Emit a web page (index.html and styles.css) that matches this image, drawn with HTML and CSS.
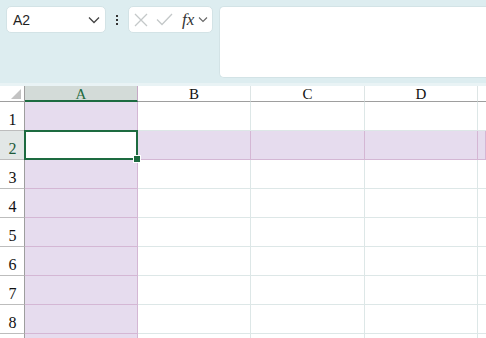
FILE: index.html
```html
<!DOCTYPE html>
<html>
<head>
<meta charset="utf-8">
<link rel="stylesheet" href="styles.css">
</head>
<body>
<div class="top">
  <div class="namebox">
    <span class="ref">A2</span>
    <svg class="chev" width="12" height="8" viewBox="0 0 12 8"><path d="M1 1.5 L6 6.5 L11 1.5" fill="none" stroke="#444" stroke-width="1.3"/></svg>
  </div>
  <div class="kebab"><i></i><i></i><i></i></div>
  <div class="fbox">
    <svg width="14" height="14" viewBox="0 0 14 14"><path d="M1 1 L13 13 M13 1 L1 13" stroke="#c4c8c9" stroke-width="1.3"/></svg>
    <svg width="17" height="13" viewBox="0 0 17 13"><path d="M1 6.5 L6 11.5 L16 1" fill="none" stroke="#c4c8c9" stroke-width="1.3"/></svg>
    <span class="fx">fx</span>
    <svg width="10" height="7" viewBox="0 0 10 7"><path d="M1 1.5 L5 5.5 L9 1.5" fill="none" stroke="#666" stroke-width="1.1"/></svg>
  </div>
  <div class="formula"></div>
</div>
<div class="sheet">
  <div class="corner"><span class="tri"></span></div>
  <div class="ch sel">A</div>
  <div class="ch">B</div>
  <div class="ch">C</div>
  <div class="ch">D</div>
  <div class="ch last"></div>

  <div class="rh">1</div><div class="c hl"></div><div class="c"></div><div class="c"></div><div class="c"></div><div class="c last"></div>
  <div class="rh rsel">2</div><div class="c active"><span class="handle"></span></div><div class="c hl"></div><div class="c hl"></div><div class="c hl"></div><div class="c hl last"></div>
  <div class="rh">3</div><div class="c hl"></div><div class="c"></div><div class="c"></div><div class="c"></div><div class="c last"></div>
  <div class="rh">4</div><div class="c hl"></div><div class="c"></div><div class="c"></div><div class="c"></div><div class="c last"></div>
  <div class="rh">5</div><div class="c hl"></div><div class="c"></div><div class="c"></div><div class="c"></div><div class="c last"></div>
  <div class="rh">6</div><div class="c hl"></div><div class="c"></div><div class="c"></div><div class="c"></div><div class="c last"></div>
  <div class="rh">7</div><div class="c hl"></div><div class="c"></div><div class="c"></div><div class="c"></div><div class="c last"></div>
  <div class="rh">8</div><div class="c hl"></div><div class="c"></div><div class="c"></div><div class="c"></div><div class="c last"></div>
  <div class="rh"></div><div class="c hl"></div><div class="c"></div><div class="c"></div><div class="c"></div><div class="c last"></div>
</div>
</body>
</html>
```

FILE: styles.css
```css
* { box-sizing: border-box; }
html, body { margin: 0; padding: 0; }
body {
  width: 486px;
  height: 338px;
  overflow: hidden;
  background: #ffffff;
  font-family: "Liberation Sans", Arial, sans-serif;
}
.top {
  height: 86px;
  background: #ddedf0;
  border-bottom: 3px solid #e9f3f5;
  padding: 6px 0 0 6px;
  display: flex;
  align-items: flex-start;
}
.namebox {
  width: 100px;
  height: 27px;
  background: #fff;
  border: 1px solid #d3e3e6;
  border-radius: 5px;
  display: flex;
  align-items: center;
  justify-content: space-between;
  padding: 0 5px 0 6px;
}
.ref { font-size: 14px; color: #1f1f1f; }
.kebab {
  width: 22px;
  height: 27px;
  display: flex;
  flex-direction: column;
  align-items: center;
  justify-content: center;
  gap: 2px;
}
.kebab i {
  display: block;
  width: 2px;
  height: 2px;
  background: #333;
}
.fbox {
  width: 85px;
  height: 27px;
  background: #fff;
  border: 1px solid #d3e3e6;
  border-radius: 5px;
  display: flex;
  align-items: center;
  padding: 0 2px 0 5px;
  gap: 8px;
}
.fx {
  font-family: "Liberation Serif", "Times New Roman", serif;
  font-style: italic;
  font-size: 17px;
  color: #333;
  margin-left: 1px;
  margin-right: -4px;
}
.formula {
  margin-left: 6px;
  flex: 1;
  height: 72px;
  background: #fff;
  border: 1px solid #d3e3e6;
  border-right: none;
  border-radius: 5px 0 0 5px;
}
.sheet {
  display: grid;
  grid-template-columns: 25px 113px 113px 114px 113px 8px;
  grid-template-rows: 16px repeat(9, 29px);
  font-family: "Liberation Serif", "Times New Roman", serif;
  font-size: 15px;
  color: #111;
}
.corner {
  border-right: 1px solid #9e9e9e;
  border-bottom: 1px solid #9e9e9e;
  position: relative;
}
.tri {
  position: absolute;
  right: 3px;
  bottom: 2px;
  width: 0;
  height: 0;
  border-left: 10px solid transparent;
  border-bottom: 10px solid #c3c3c3;
}
.ch {
  border-right: 1px solid #dde5e5;
  border-bottom: 1px solid #9e9e9e;
  display: flex;
  align-items: center;
  justify-content: center;
  line-height: 14px;
  font-size: 15px;
  padding-top: 1px;
}
.ch.sel {
  background: #d3dbd8;
  border-bottom: 2px solid #1d6b40;
  border-right: 1px solid #c5a8c5;
  color: #1d6b40;
  padding-top: 2px;
}
.ch.last { border-right: none; }
.rh {
  border-right: 1px solid #9e9e9e;
  border-bottom: 1px solid #bdbdbd;
  display: flex;
  align-items: flex-end;
  justify-content: center;
  padding-bottom: 1px;
  padding-left: 1px;
  font-size: 16px;
}
.rh.rsel { background: #e2e7e6; color: #1d5a3a; }
.c {
  border-right: 1px solid #dde7e7;
  border-bottom: 1px solid #dde7e7;
  background: #fff;
}
.c.last { border-right: none; }
.c.hl {
  background: #e6dcee;
  border-right: 1px solid #d4b7d4;
  border-bottom: 1px solid #d4b7d4;
}
.c.active {
  position: relative;
  background: #fff;
  border-right: 1px solid #d4b7d4;
  border-bottom: 1px solid #d4b7d4;
}
.c.active::before {
  content: "";
  position: absolute;
  left: -1px;
  top: -1px;
  right: -1px;
  bottom: -1px;
  border: 2px solid #1d6b40;
}
.handle {
  position: absolute;
  right: -3px;
  bottom: -3px;
  width: 6px;
  height: 6px;
  background: #1d6b40;
  border: 1px solid #fff;
  box-sizing: content-box;
  margin: -1px;
  z-index: 2;
}
```
